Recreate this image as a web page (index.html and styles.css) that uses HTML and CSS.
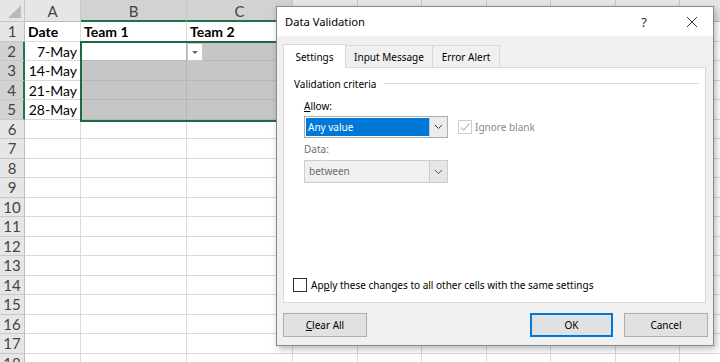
FILE: index.html
```html
<!DOCTYPE html>
<html>
<head>
<meta charset="utf-8">
<title>Data Validation</title>
<link rel="stylesheet" href="styles.css">
</head>
<body>
<div class="app">
  <div class="sheet">
    <div class="corner"></div><div class="ch">A</div><div class="ch sel">B</div><div class="ch sel">C</div><div class="ch"></div><div class="ch"></div><div class="ch"></div><div class="ch"></div><div class="ch"></div><div class="ch"></div><div class="ch"></div>

    <div class="rh">1</div><div class="b">Date</div><div class="b">Team 1</div><div class="b">Team 2</div><div></div><div></div><div></div><div></div><div></div><div></div><div></div>
    <div class="rh sel">2</div><div class="n">7-May</div><div class="act"></div><div class="fill"></div><div></div><div></div><div></div><div></div><div></div><div></div><div></div>
    <div class="rh sel">3</div><div class="n">14-May</div><div class="fill"></div><div class="fill"></div><div></div><div></div><div></div><div></div><div></div><div></div><div></div>
    <div class="rh sel">4</div><div class="n">21-May</div><div class="fill"></div><div class="fill"></div><div></div><div></div><div></div><div></div><div></div><div></div><div></div>
    <div class="rh sel">5</div><div class="n">28-May</div><div class="fill"></div><div class="fill"></div><div></div><div></div><div></div><div></div><div></div><div></div><div></div>
    <div class="rh">6</div><div></div><div></div><div></div><div></div><div></div><div></div><div></div><div></div><div></div><div></div>
    <div class="rh">7</div><div></div><div></div><div></div><div></div><div></div><div></div><div></div><div></div><div></div><div></div>
    <div class="rh">8</div><div></div><div></div><div></div><div></div><div></div><div></div><div></div><div></div><div></div><div></div>
    <div class="rh">9</div><div></div><div></div><div></div><div></div><div></div><div></div><div></div><div></div><div></div><div></div>
    <div class="rh">10</div><div></div><div></div><div></div><div></div><div></div><div></div><div></div><div></div><div></div><div></div>
    <div class="rh">11</div><div></div><div></div><div></div><div></div><div></div><div></div><div></div><div></div><div></div><div></div>
    <div class="rh">12</div><div></div><div></div><div></div><div></div><div></div><div></div><div></div><div></div><div></div><div></div>
    <div class="rh">13</div><div></div><div></div><div></div><div></div><div></div><div></div><div></div><div></div><div></div><div></div>
    <div class="rh">14</div><div></div><div></div><div></div><div></div><div></div><div></div><div></div><div></div><div></div><div></div>
    <div class="rh">15</div><div></div><div></div><div></div><div></div><div></div><div></div><div></div><div></div><div></div><div></div>
    <div class="rh">16</div><div></div><div></div><div></div><div></div><div></div><div></div><div></div><div></div><div></div><div></div>
    <div class="rh">17</div><div></div><div></div><div></div><div></div><div></div><div></div><div></div><div></div><div></div><div></div>
    <div class="rh">18</div><div></div><div></div><div></div><div></div><div></div><div></div><div></div><div></div><div></div><div></div>
  </div>

  <div class="selbox"></div>
  <div class="ddbtn"><span class="tri"></span></div>

  <div class="dialog">
    <div class="titlebar">
      <span class="title">Data Validation</span>
      <span class="help">?</span>
      <svg class="close" width="12" height="12" viewBox="0 0 12 12"><path d="M1 1L11 11M11 1L1 11" stroke="#333" stroke-width="1" fill="none"/></svg>
    </div>
    <div class="dbody">
      <div class="tabs">
        <div class="tab active tab-settings">Settings</div>
        <div class="tab tab-input">Input Message</div>
        <div class="tab tab-error">Error Alert</div>
      </div>
      <div class="panel">
        <div class="group"><span>Validation criteria</span><span class="rule"></span></div>
        <div class="fields">
          <div class="lbl"><u>A</u>llow:</div>
          <div class="allowrow">
            <div class="combo">
              <div class="val selv">Any value</div>
              <div class="cbtn"><svg width="9" height="6" viewBox="0 0 9 6"><path d="M1 1L4.5 4.5L8 1" stroke="#444" stroke-width="1" fill="none"/></svg></div>
            </div>
            <div class="chk dis">
              <span class="box"><svg width="12" height="12" viewBox="0 0 12 12"><path d="M2 6.5L4.8 9.2L10.5 2.5" stroke="#bdbdbd" stroke-width="1.2" fill="none"/></svg></span>
              <span>Ignore blank</span>
            </div>
          </div>
          <div class="lbl dis">Data:</div>
          <div class="combo disabled">
            <div class="val">between</div>
            <div class="cbtn"><svg width="9" height="6" viewBox="0 0 9 6"><path d="M1 1L4.5 4.5L8 1" stroke="#555" stroke-width="1" fill="none"/></svg></div>
          </div>
        </div>
        <div class="apply"><span class="box"></span><span>Ap<u>p</u>ly these changes to all other cells with the same settings</span></div>
      </div>
      <div class="buttons">
        <button class="btn"><u>C</u>lear All</button>
        <button class="btn primary">OK</button>
        <button class="btn">Cancel</button>
      </div>
    </div>
  </div>
</div>
</body>
</html>
```

FILE: styles.css
```css
* { box-sizing: border-box; margin: 0; padding: 0; }
html, body { width: 720px; height: 362px; overflow: hidden; background: #fff; }
body { font-family: Lato, "Liberation Sans", sans-serif; }

.app { position: relative; width: 720px; height: 362px; overflow: hidden; }

/* spreadsheet */
.sheet {
  display: grid;
  grid-template-columns: 25px 56px 106px 106px repeat(7, 64.5px);
  grid-template-rows: 22px repeat(18, 19.5px);
  width: max-content;
}
.sheet > div {
  border-right: 1px solid #dadada;
  border-bottom: 1px solid #dadada;
  font-size: 14px;
  line-height: 19px;
  white-space: nowrap;
  overflow: hidden;
  padding: 0 3px;
  color: #000;
}
.sheet > .corner {
  background: #e6e6e6;
  border-color: #c6c6c6;
  position: relative;
}
.sheet > .corner::after {
  content: "";
  position: absolute;
  right: 3px; bottom: 3px;
  border-left: 13px solid transparent;
  border-bottom: 13px solid #b9b9b9;
}
.sheet > .ch {
  background: #e6e6e6;
  color: #444;
  text-align: center;
  border-right-color: #c8c8c8;
  border-bottom-color: #bdbdbd;
  line-height: 22px;
  font-size: 15px;
}
.sheet > .ch.sel {
  background: #d2d2d2;
  border-bottom: 2px solid #217346;
  color: #444;
}
.sheet > .rh {
  background: #e6e6e6;
  color: #444;
  text-align: center;
  border-right-color: #bdbdbd;
  border-bottom-color: #c8c8c8;
  padding: 0;
  font-size: 15px;
}
.sheet > .rh.sel {
  background: #d2d2d2;
  border-right: 2px solid #217346;
}
.sheet > .b { font-weight: 700; }
.sheet > .n { text-align: right; }
.sheet > .fill { background: #c6c6c6; border-color: #b6b6b6; }
.sheet > .act { background: #fff; border-color: #b6b6b6; }

.selbox {
  position: absolute;
  left: 80px; top: 41px;
  width: 214px; height: 81px;
  border: 2px solid #1f6a40;
  pointer-events: none;
}
.ddbtn {
  position: absolute;
  left: 187px; top: 43px;
  width: 16px; height: 18px;
  background: #fff;
  border: 1px solid #c9c9c9;
  display: flex; align-items: center; justify-content: center;
}
.ddbtn .tri {
  width: 0; height: 0;
  border-left: 3px solid transparent;
  border-right: 3px solid transparent;
  border-top: 3px solid #666;
}

/* dialog */
.dialog {
  position: absolute;
  left: 276px; top: 6px;
  width: 438px; height: 340px;
  border: 1px solid #8a8a8a;
  background: #f0f0f0;
  box-shadow: 2px 3px 7px rgba(0,0,0,0.28);
  display: flex; flex-direction: column;
  font-family: "Noto Sans", "Open Sans", sans-serif;
  font-size: 10px;
  color: #000;
}
.titlebar {
  height: 29px;
  background: #fff;
  display: flex; align-items: center;
  padding-left: 8px;
  line-height: 16px;
}
.title { font-size: 11.2px; color: #000; }
.help { font-size: 13px; color: #333; margin-left: auto; margin-right: 39px; }
.close { margin-right: 15px; }

.dbody {
  flex: 1;
  display: flex; flex-direction: column;
  padding: 8px 7px 0 6px;
}
.tabs {
  display: flex; align-items: flex-end;
  height: 23px;
  position: relative; z-index: 1;
}
.tab {
  height: 22px;
  border: 1px solid #d9d9d9;
  border-bottom: none;
  display: flex; align-items: center; justify-content: center;
  background: #f0f0f0;
  margin-left: -1px;
}
.tab.active {
  height: 24px;
  background: #fff;
  margin-left: 0;
  margin-bottom: -1px;
}
.tab-settings { width: 63px; }
.tab-input { width: 88px; }
.tab-error { width: 68px; }

.panel {
  height: 236px;
  background: #fff;
  border: 1px solid #d9d9d9;
  display: flex; flex-direction: column;
  padding: 8px 6px 0 9px;
}
.group {
  display: flex; align-items: center;
  height: 16px;
  padding-left: 1px;
}
.rule { flex: 1; height: 1px; background: #dcdcdc; margin-left: 8px; margin-top: -1px; }

.fields { padding-left: 11px; margin-top: 6px; }
.lbl { height: 16px; line-height: 16px; }
.lbl.dis { color: #6d6d6d; margin-top: 3px; }
.allowrow { display: flex; align-items: center; margin-top: 2px; }

.combo {
  width: 144px; height: 22px;
  border: 1px solid #adadad;
  background: #fff;
  display: flex;
}
.combo .val {
  flex: 1;
  line-height: 18px;
  padding-left: 3px;
}
.combo .selv {
  margin: 1px 0 1px 1px;
  background: #0078d7;
  color: #fff;
  padding-left: 2px;
}
.cbtn {
  width: 18px;
  border-left: 1px solid #c5c5c5;
  background: #ececec;
  display: flex; align-items: center; justify-content: center;
}
.combo.disabled {
  background: #f0f0f0;
  border-color: #cccccc;
  margin-top: 3px;
  height: 23px;
}
.combo.disabled .val { color: #6d6d6d; line-height: 21px; padding-left: 4px; }
.combo.disabled .cbtn { background: #e6e6e6; border-left-color: #cccccc; }

.chk { display: flex; align-items: center; margin-left: 10px; }
.chk .box {
  width: 14px; height: 14px;
  border: 1px solid #cccccc;
  display: flex; align-items: center; justify-content: center;
  margin-right: 3px;
}
.chk.dis { color: #8a8a8a; }

.apply {
  margin-top: auto;
  margin-bottom: 10px;
  display: flex; align-items: center;
  padding-left: 0;
}
.apply .box {
  width: 14px; height: 14px;
  border: 1px solid #333;
  background: #fff;
  margin-right: 4px;
}

.buttons {
  display: flex;
  margin-top: 10px;
  margin-right: -2px;
}
.btn {
  height: 24px;
  width: 84px;
  background: #e1e1e1;
  border: 1px solid #adadad;
  font-family: "Noto Sans", "Open Sans", sans-serif;
  font-size: 10px;
  color: #000;
}
.btn.primary {
  margin-left: auto;
  margin-right: 11px;
  width: 83px;
  border: 2px solid #0078d7;
}
```
